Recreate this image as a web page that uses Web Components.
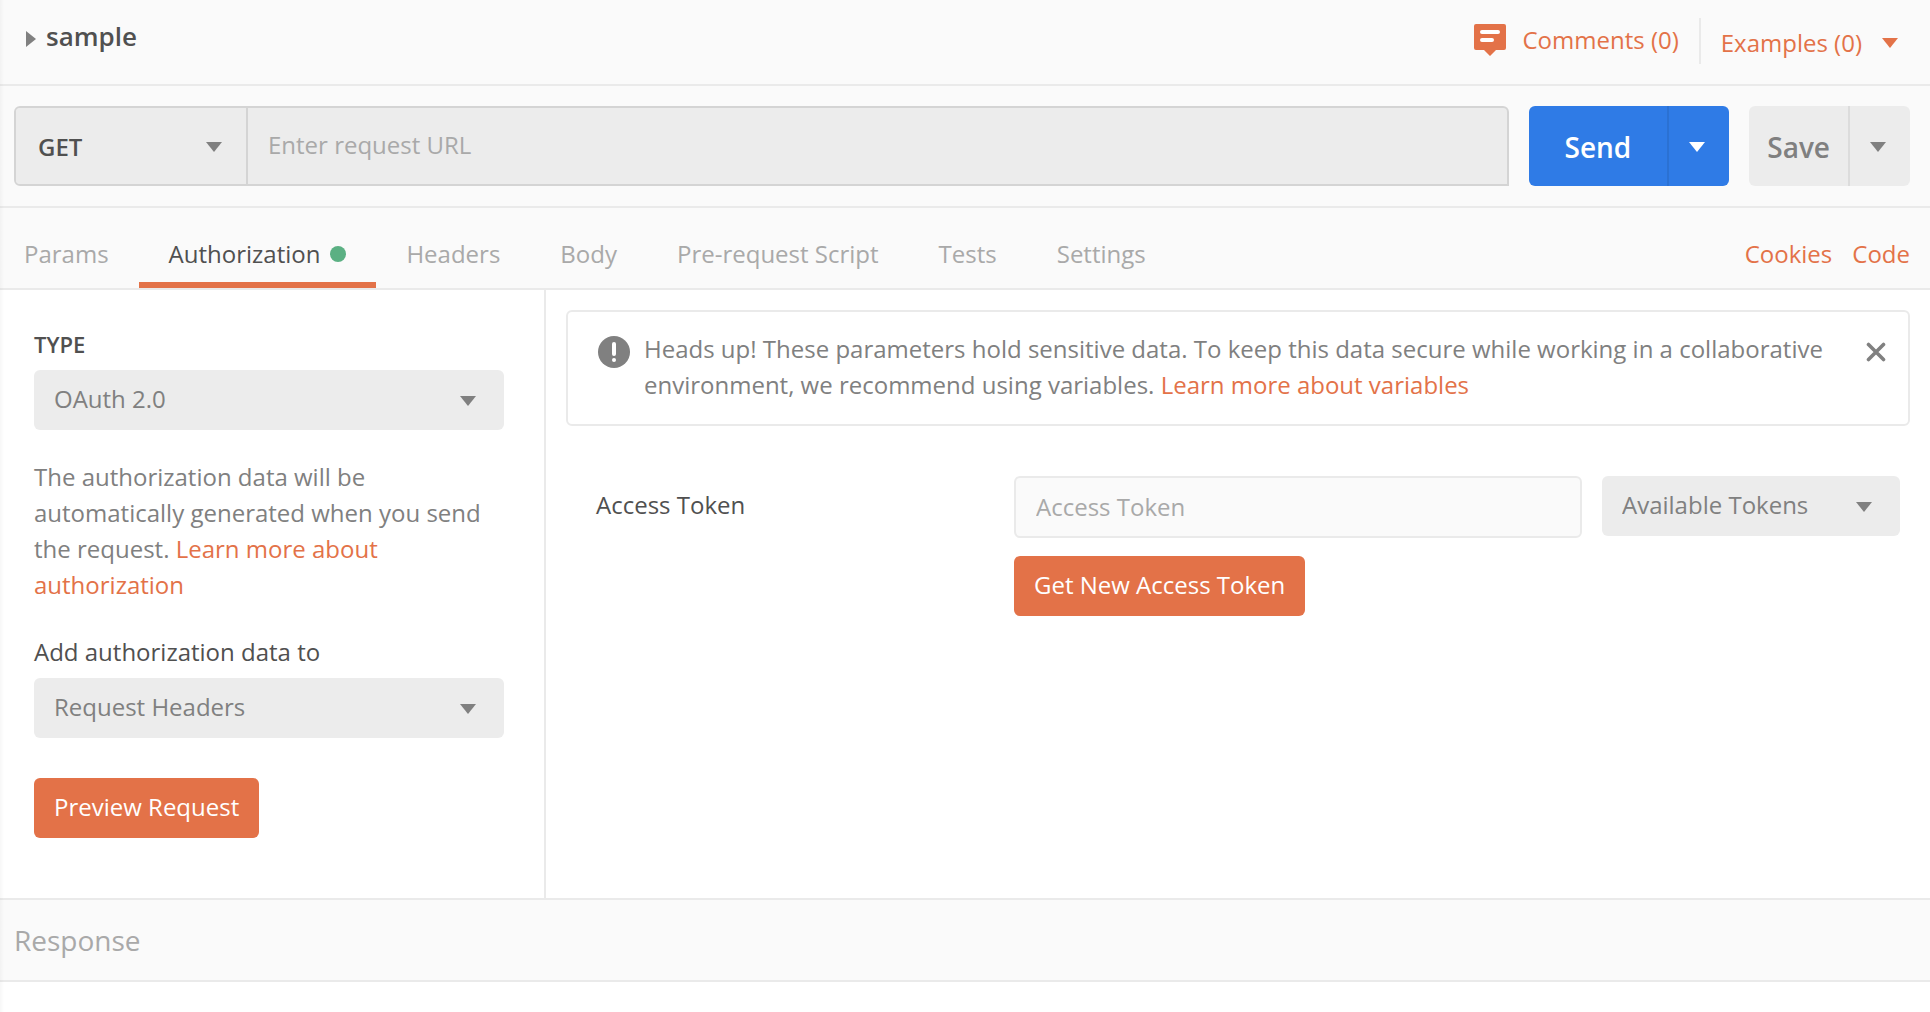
<!DOCTYPE html>
<html lang="en">
<head>
<meta charset="utf-8">
<title>sample</title>
<style>
  :root {
    --ink: #505050; --muted: #808080; --faint: #a9a9a9;
    --orange: #e37248; --blue: #2f7be6; --green: #5bb083;
    --bar: #fafafa; --line: #eaeaea; --fill: #ececec; --edge: #d4d4d4;
  }
  body { margin: 0; background: #fff; color: var(--ink); font: 24px/36px "Open Sans", sans-serif; }
</style>
</head>
<body>
<request-page></request-page>
<script>
const BASE = `<style>
  *, *::before { box-sizing: border-box; }
  button, input, select { font: inherit; color: inherit; margin: 0; border: 0; outline: 0; }
  button { cursor: pointer; padding: 0; }
  h1, h2, p { margin: 0; }
  a { color: var(--orange); text-decoration: none; }
  svg { display: block; flex: none; }
</style>`;
function define(name, render) {
  customElements.define(name, class extends HTMLElement {
    connectedCallback() {
      if (this.shadowRoot) return;
      this.attachShadow({ mode: "open" }).innerHTML = BASE + render(this);
    }
  });
}

/* Small solid triangle; dir="right" points it sideways */
define("caret-icon", el => `
  <style>:host { display: block; flex: none; pointer-events: none; } svg { fill: currentColor; }</style>
  ${el.getAttribute("dir") === "right"
    ? `<svg width="10" height="16" viewBox="0 0 10 16"><path d="M0 0 10 8 0 16z"/></svg>`
    : `<svg width="16" height="10" viewBox="0 0 16 10"><path d="M0 0h16L8 10z"/></svg>`}`);

/* Labelled drop-down */
define("select-field", el => `
  <style>
    :host { display: block; color: var(--muted); }
    label { display: block; color: var(--ink); padding-bottom: 8px; }
    :host([caps]) label { font-size: 22px; font-weight: 600; }
    .box { display: grid; align-items: center; height: 60px; }
    .box > * { grid-area: 1 / 1; }
    select { appearance: none; width: 100%; height: 100%; padding: 0 20px 2px; background: var(--fill); border-radius: 6px; }
    caret-icon { justify-self: end; margin-right: 28px; padding-top: 2px; color: var(--muted); }
    :host([method]) { color: var(--ink); font-weight: 600; }
    :host([method]) .box { height: 100%; }
    :host([method]) select { border-radius: 4px 0 0 4px; padding: 2px 22px 0; }
    :host([method]) caret-icon { margin-right: 24px; }
  </style>
  ${el.hasAttribute("label") ? `<label for="s">${el.getAttribute("label")}</label>` : ""}
  <div class="box">
    <select id="s" ${el.hasAttribute("name") ? `aria-label="${el.getAttribute("name")}"` : ""}>
      <option>${el.getAttribute("value")}</option>
    </select>
    <caret-icon></caret-icon>
  </div>`);

define("primary-button", () => `
  <style>
    :host { display: block; }
    button { height: 60px; padding: 0 20px 2px; border-radius: 6px; background: var(--orange); color: #fff; }
  </style>
  <button type="button"><slot></slot></button>`);

/* Button with an attached drop-down part */
define("split-button", el => `
  <style>
    :host { display: flex; flex: none; height: 80px; border-radius: 6px; overflow: hidden;
      background: var(--fill); color: var(--muted); font-size: 28px; font-weight: 600; --seam: #dcdcdc; }
    :host([blue]) { background: var(--blue); color: #fff; --seam: #2b71d3; }
    button { background: none; }
    .main { padding: 2px 18px 0; }
    :host([blue]) .main { padding: 2px 36px 0; }
    .more { width: 62px; border-left: 2px solid var(--seam); display: grid; place-content: center; padding: 2px 4px 0 0; }
  </style>
  <button type="button" class="main"><slot></slot></button>
  <button type="button" class="more" aria-label="More options"><caret-icon></caret-icon></button>`);

define("title-bar", () => `
  <style>
    :host { display: flex; justify-content: space-between; align-items: center; height: 86px;
      padding: 0 32px 2px 26px; background: var(--bar); border-bottom: 2px solid var(--line); }
    .name, .links, a { display: flex; align-items: center; }
    .name { gap: 10px; padding-bottom: 4px; }
    .name caret-icon { color: var(--muted); }
    h1 { font-size: 26px; font-weight: 600; line-height: 36px; padding-bottom: 6px; }
    .comments { gap: 16px; padding-right: 20px; padding-bottom: 2px; }
    .examples { gap: 20px; height: 46px; padding: 4px 0 0 20px; border-left: 2px solid var(--line); }
  </style>
  <div class="name"><caret-icon dir="right"></caret-icon><h1>sample</h1></div>
  <nav class="links">
    <a class="comments" href="#comments">
      <svg width="32" height="32" viewBox="0 0 32 32"><path fill="#e37248" d="M2 0h28a2 2 0 0 1 2 2v22a2 2 0 0 1-2 2h-8l-6 6-6-6H2a2 2 0 0 1-2-2V2a2 2 0 0 1 2-2z"/><path stroke="#fff" stroke-width="4" stroke-linecap="round" d="M8 8h16M8 16h10"/></svg>
      Comments (0)</a>
    <a class="examples" href="#examples">Examples (0)<caret-icon></caret-icon></a>
  </nav>`);

define("request-bar", () => `
  <style>
    :host { display: flex; gap: 20px; padding: 20px 20px 20px 14px; background: var(--bar); border-bottom: 2px solid var(--line); }
    .url { flex: 1; display: flex; height: 80px; border: 2px solid var(--edge); border-radius: 6px 6px 0 6px; background: var(--fill); }
    select-field { width: 232px; flex: none; border-right: 2px solid var(--edge); }
    input { flex: 1; min-width: 0; padding: 0 20px 2px; background: none; }
    input::placeholder { color: var(--faint); opacity: 1; }
  </style>
  <div class="url">
    <select-field method name="Method" value="GET"></select-field>
    <input type="text" aria-label="Request URL" placeholder="Enter request URL">
  </div>
  <split-button blue>Send</split-button>
  <split-button>Save</split-button>`);

define("tab-item", el => `
  <style>
    :host { display: block; }
    button { display: flex; align-items: center; gap: 10px; height: 80px; padding: 18px 30px 0;
      background: none; color: var(--faint); border-bottom: 6px solid transparent; }
    :host([active]) button { color: var(--ink); border-color: var(--orange); }
    i { width: 16px; height: 16px; border-radius: 50%; background: var(--green); }
  </style>
  <button type="button"><slot></slot>${el.hasAttribute("active") ? "<i></i>" : ""}</button>`);

define("tab-bar", () => `
  <style>
    :host { display: flex; justify-content: space-between; padding-right: 20px; background: var(--bar); border-bottom: 2px solid var(--line); }
    .tabs { display: flex; margin-left: -6px; }
    .links { display: flex; align-items: center; gap: 20px; padding-top: 18px; border-bottom: 6px solid transparent; }
  </style>
  <nav class="tabs">
    <tab-item>Params</tab-item><tab-item active>Authorization</tab-item><tab-item>Headers</tab-item>
    <tab-item>Body</tab-item><tab-item>Pre-request Script</tab-item><tab-item>Tests</tab-item><tab-item>Settings</tab-item>
  </nav>
  <div class="links"><a href="#cookies">Cookies</a><a href="#code">Code</a></div>`);

define("auth-sidebar", () => `
  <style>
    :host { display: block; flex: none; width: 546px; padding: 36px 40px 60px 34px; border-right: 2px solid var(--line); }
    p { color: var(--muted); padding: 29px 0 31px; }
    primary-button { padding-top: 40px; }
  </style>
  <select-field caps label="TYPE" value="OAuth 2.0"></select-field>
  <p>The authorization data will be automatically generated when you send the request. <a href="#auth">Learn more about authorization</a></p>
  <select-field label="Add authorization data to" value="Request Headers"></select-field>
  <primary-button>Preview Request</primary-button>`);

define("notice-box", () => `
  <style>
    :host { display: flex; align-items: flex-start; gap: 14px; padding: 19px 22px 21px 30px; border: 2px solid var(--line); border-radius: 6px; color: var(--muted); }
    p { flex: 1; }
    .badge { margin-top: 5px; }
    button { margin-top: 11px; background: none; }
  </style>
  <svg class="badge" width="32" height="32" viewBox="0 0 32 32"><circle cx="16" cy="16" r="16" fill="#808080"/><path stroke="#fff" stroke-width="4" stroke-linecap="round" d="M16 8v10"/><circle cx="16" cy="24" r="2" fill="#fff"/></svg>
  <p><slot></slot></p>
  <button type="button" aria-label="Dismiss"><svg width="20" height="20" viewBox="0 0 20 20"><path stroke="#808080" stroke-width="3.6" stroke-linecap="round" d="M2.5 2.5l15 15M17.5 2.5l-15 15"/></svg></button>`);

define("token-form", () => `
  <style>
    :host { display: grid; grid-template-columns: 398px minmax(0, 1fr) 298px; column-gap: 20px; row-gap: 18px; padding: 50px 10px 0 30px; }
    label { padding-top: 11px; }
    input { width: 100%; height: 62px; padding: 0 20px 2px; background: var(--bar); border: 2px solid var(--line); border-radius: 6px; }
    input::placeholder { color: var(--faint); opacity: 1; }
    primary-button { grid-column: 2; }
  </style>
  <label for="token">Access Token</label>
  <input id="token" type="text" placeholder="Access Token">
  <select-field name="Available Tokens" value="Available Tokens"></select-field>
  <primary-button>Get New Access Token</primary-button>`);

define("auth-panel", () => `
  <style>
    :host { display: block; flex: 1; min-width: 0; padding: 20px; }
  </style>
  <notice-box>Heads up! These parameters hold sensitive data. To keep this data secure while working in a collaborative environment, we recommend using variables. <a href="#variables">Learn more about variables</a></notice-box>
  <token-form></token-form>`);

define("response-bar", () => `
  <style>
    :host { display: block; padding: 20px 14px; background: var(--bar); border: solid var(--line); border-width: 2px 0; }
    h2 { font-size: 28px; line-height: 40px; font-weight: 400; color: var(--faint); }
  </style>
  <h2>Response</h2>`);

define("request-page", () => `
  <style>
    :host { display: block; min-height: 100vh; position: relative; }
    :host::before { content: ""; position: absolute; inset: 0 auto 0 0; width: 4px; z-index: 1;
      background: linear-gradient(90deg, rgba(0,0,0,.03), transparent); pointer-events: none; }
    main { display: flex; }
  </style>
  <title-bar></title-bar>
  <request-bar></request-bar>
  <tab-bar></tab-bar>
  <main><auth-sidebar></auth-sidebar><auth-panel></auth-panel></main>
  <response-bar></response-bar>`);
</script>
</body>
</html>
